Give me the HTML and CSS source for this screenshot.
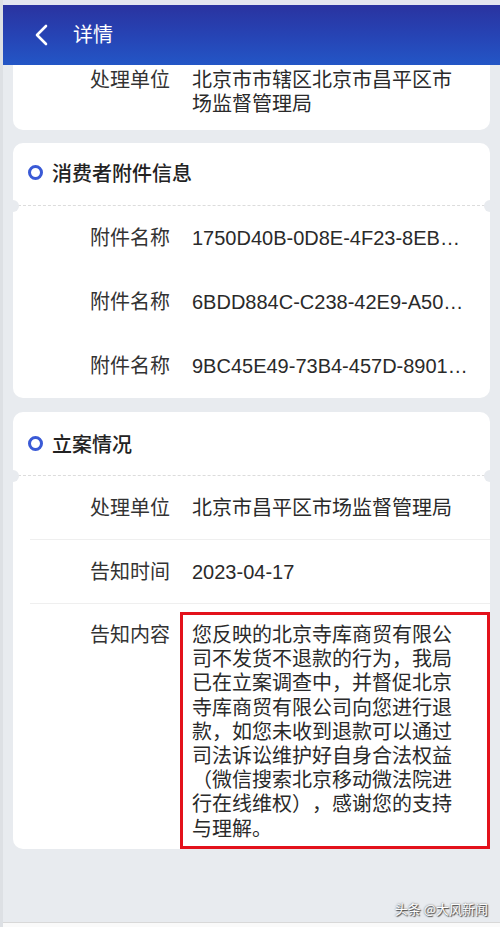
FILE: index.html
```html
<!DOCTYPE html>
<html>
<head>
    <meta charset="UTF-8">
    <meta name="viewport" content="width=device-width, initial-scale=1.0">
    <title>详情</title>
    <link rel="stylesheet" href="styles.css">
</head>
<body>
    <div class="page">
        <div class="status-strip"></div>
        <div class="header">
            <svg class="back" width="16" height="22" viewBox="0 0 16 22">
                <path d="M12 2 L3 11 L12 20" fill="none" stroke="#fff" stroke-width="2.6" stroke-linecap="round" stroke-linejoin="round"/>
            </svg>
            <span class="title">详情</span>
        </div>

        <div class="content">
            <div class="card card-top">
                <div class="row row-wrap">
                    <div class="label">处理单位</div>
                    <div class="value">北京市市辖区北京市昌平区市场监督管理局</div>
                </div>
            </div>

            <div class="card">
                <div class="section-head">
                    <span class="ring"></span>
                    <span class="section-title">消费者附件信息</span>
                </div>
                <div class="row">
                    <div class="label">附件名称</div>
                    <div class="value nowrap">1750D40B-0D8E-4F23-8EB…</div>
                </div>
                <div class="row">
                    <div class="label">附件名称</div>
                    <div class="value nowrap">6BDD884C-C238-42E9-A50…</div>
                </div>
                <div class="row">
                    <div class="label">附件名称</div>
                    <div class="value nowrap">9BC45E49-73B4-457D-8901…</div>
                </div>
            </div>

            <div class="card card-last">
                <div class="section-head">
                    <span class="ring"></span>
                    <span class="section-title">立案情况</span>
                </div>
                <div class="row lined">
                    <div class="label">处理单位</div>
                    <div class="value nowrap">北京市昌平区市场监督管理局</div>
                </div>
                <div class="row lined">
                    <div class="label">告知时间</div>
                    <div class="value">2023-04-17</div>
                </div>
                <div class="row row-notice">
                    <div class="label">告知内容</div>
                    <div class="value notice">您反映的北京寺库商贸有限公司不发货不退款的行为，我局已在立案调查中，并督促北京寺库商贸有限公司向您进行退款，如您未收到退款可以通过司法诉讼维护好自身合法权益（微信搜索北京移动微法院进行在线维权），感谢您的支持与理解。</div>
                </div>
            </div>
        </div>

        <div class="footer">
            <span class="watermark">头条 @大风新闻</span>
        </div>
        <div class="bottom-line"></div>
    </div>
</body>
</html>
```

FILE: styles.css
```css
* {
    box-sizing: border-box;
}

body {
    margin: 0;
    padding: 0;
    font-family: "Liberation Sans", "Noto Sans CJK SC", sans-serif;
    color: #2a2a2a;
    background-color: #e8ebef;
    text-spacing-trim: space-all;
}

.page {
    height: 927px;
    display: flex;
    flex-direction: column;
    border-left: 3px solid #dde0e4;
    overflow: hidden;
}

.status-strip {
    height: 5px;
    background-color: #e4e6f0;
    margin-left: -3px;
}

.header {
    height: 60px;
    margin-left: -3px;
    display: flex;
    align-items: center;
    padding-left: 34px;
    background: linear-gradient(180deg, #2a33a0 0%, #2645b6 55%, #2356c6 100%);
}

.back {
    display: block;
}

.title {
    margin-left: 23px;
    font-size: 20px;
    color: #fff;
    line-height: 1;
}

.content {
    padding: 0 10px;
    display: flex;
    flex-direction: column;
    gap: 13px;
}

.card {
    background-color: #fff;
    border-radius: 10px;
}

.card-top {
    border-radius: 0 0 10px 10px;
    padding: 3px 0 14px;
}

.card-last {
    margin-top: 1px;
}

.card-last .section-head {
    height: 64px;
    padding-bottom: 1px;
}

.section-head {
    position: relative;
    height: 63px;
    display: flex;
    align-items: center;
    padding-left: 15px;
    padding-bottom: 3px;
    border-bottom: 1px dashed #dcdcdc;
}

.section-head::before,
.section-head::after {
    content: "";
    position: absolute;
    bottom: -7px;
    width: 12px;
    height: 12px;
    border-radius: 50%;
    background-color: #e8ebef;
}

.section-head::before {
    left: -6px;
}

.section-head::after {
    right: -6px;
}

.ring {
    width: 15px;
    height: 15px;
    border: 3.5px solid #3a5ad6;
    border-radius: 50%;
}

.section-title {
    margin-left: 9px;
    font-size: 20px;
    font-weight: 500;
    color: #222;
}

.row {
    display: flex;
    align-items: center;
    height: 64px;
    padding-left: 77px;
    padding-right: 24px;
    font-size: 20px;
    line-height: 24px;
}

.row-wrap {
    height: auto;
    align-items: flex-start;
}

.lined {
    position: relative;
}

.lined::after {
    content: "";
    position: absolute;
    left: 17px;
    right: 0;
    bottom: 0;
    height: 1px;
    background-color: #efefef;
}

.label {
    width: 80px;
    flex-shrink: 0;
    text-align: right;
    color: #333;
}

.value {
    margin-left: 22px;
    flex: 1;
    min-width: 0;
    color: #2a2a2a;
}

.nowrap {
    white-space: nowrap;
}

.row-notice {
    height: auto;
    align-items: flex-start;
    padding-top: 8px;
    padding-right: 0;
}

.row-notice .label {
    margin-top: 11px;
}

.notice {
    margin-left: 10px;
    border: 3px solid #e3111b;
    padding: 8px 22px 5px 9px;
    line-height: 24.2px;
}

.footer {
    flex: 1;
    display: flex;
    align-items: flex-end;
    justify-content: flex-end;
    padding: 0 12px 4px 0;
}

.watermark {
    font-family: "Noto Sans CJK SC", sans-serif;
    font-size: 13px;
    color: #fff;
    text-shadow: 0 0 2px #555, 1px 1px 1px #444;
}

.bottom-line {
    height: 5px;
    margin-left: -3px;
    background-color: #fafafa;
    border-top: 1px solid #d8d8d8;
}
```
